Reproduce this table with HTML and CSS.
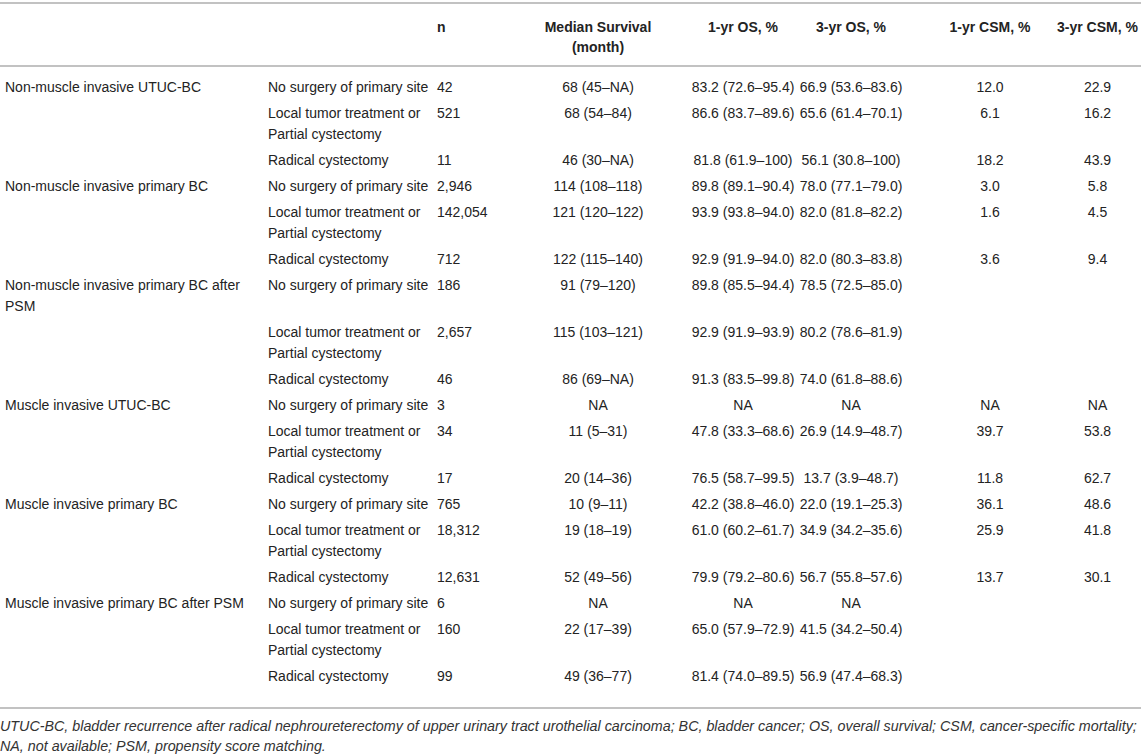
FILE: index.html
```html
<!DOCTYPE html>
<html>
<head>
<meta charset="utf-8">
<link rel="stylesheet" href="styles.css">
</head>
<body>
<div class="wrap">
<table class="tbl">
<colgroup>
<col class="c1"><col class="c2"><col class="c3"><col class="c4"><col class="c5"><col class="c6"><col class="c7"><col class="c8">
</colgroup>
<thead>
<tr>
<th></th><th></th><th>n</th><th>Median Survival<br>(month)</th><th>1-yr OS, %</th><th>3-yr OS, %</th><th>1-yr CSM, %</th><th>3-yr CSM, %</th>
</tr>
</thead>
<tbody>
<tr class="first"><td>Non-muscle invasive UTUC-BC</td><td>No surgery of primary site</td><td>42</td><td>68 (45–NA)</td><td>83.2 (72.6–95.4)</td><td>66.9 (53.6–83.6)</td><td>12.0</td><td>22.9</td></tr>
<tr><td></td><td>Local tumor treatment or Partial cystectomy</td><td>521</td><td>68 (54–84)</td><td>86.6 (83.7–89.6)</td><td>65.6 (61.4–70.1)</td><td>6.1</td><td>16.2</td></tr>
<tr><td></td><td>Radical cystectomy</td><td>11</td><td>46 (30–NA)</td><td>81.8 (61.9–100)</td><td>56.1 (30.8–100)</td><td>18.2</td><td>43.9</td></tr>

<tr><td>Non-muscle invasive primary BC</td><td>No surgery of primary site</td><td>2,946</td><td>114 (108–118)</td><td>89.8 (89.1–90.4)</td><td>78.0 (77.1–79.0)</td><td>3.0</td><td>5.8</td></tr>
<tr><td></td><td>Local tumor treatment or Partial cystectomy</td><td>142,054</td><td>121 (120–122)</td><td>93.9 (93.8–94.0)</td><td>82.0 (81.8–82.2)</td><td>1.6</td><td>4.5</td></tr>
<tr><td></td><td>Radical cystectomy</td><td>712</td><td>122 (115–140)</td><td>92.9 (91.9–94.0)</td><td>82.0 (80.3–83.8)</td><td>3.6</td><td>9.4</td></tr>

<tr><td>Non-muscle invasive primary BC after PSM</td><td>No surgery of primary site</td><td>186</td><td>91 (79–120)</td><td>89.8 (85.5–94.4)</td><td>78.5 (72.5–85.0)</td><td></td><td></td></tr>
<tr><td></td><td>Local tumor treatment or Partial cystectomy</td><td>2,657</td><td>115 (103–121)</td><td>92.9 (91.9–93.9)</td><td>80.2 (78.6–81.9)</td><td></td><td></td></tr>
<tr><td></td><td>Radical cystectomy</td><td>46</td><td>86 (69–NA)</td><td>91.3 (83.5–99.8)</td><td>74.0 (61.8–88.6)</td><td></td><td></td></tr>

<tr><td>Muscle invasive UTUC-BC</td><td>No surgery of primary site</td><td>3</td><td>NA</td><td>NA</td><td>NA</td><td>NA</td><td>NA</td></tr>
<tr><td></td><td>Local tumor treatment or Partial cystectomy</td><td>34</td><td>11 (5–31)</td><td>47.8 (33.3–68.6)</td><td>26.9 (14.9–48.7)</td><td>39.7</td><td>53.8</td></tr>
<tr><td></td><td>Radical cystectomy</td><td>17</td><td>20 (14–36)</td><td>76.5 (58.7–99.5)</td><td>13.7 (3.9–48.7)</td><td>11.8</td><td>62.7</td></tr>

<tr><td>Muscle invasive primary BC</td><td>No surgery of primary site</td><td>765</td><td>10 (9–11)</td><td>42.2 (38.8–46.0)</td><td>22.0 (19.1–25.3)</td><td>36.1</td><td>48.6</td></tr>
<tr><td></td><td>Local tumor treatment or Partial cystectomy</td><td>18,312</td><td>19 (18–19)</td><td>61.0 (60.2–61.7)</td><td>34.9 (34.2–35.6)</td><td>25.9</td><td>41.8</td></tr>
<tr><td></td><td>Radical cystectomy</td><td>12,631</td><td>52 (49–56)</td><td>79.9 (79.2–80.6)</td><td>56.7 (55.8–57.6)</td><td>13.7</td><td>30.1</td></tr>

<tr><td>Muscle invasive primary BC after PSM</td><td>No surgery of primary site</td><td>6</td><td>NA</td><td>NA</td><td>NA</td><td></td><td></td></tr>
<tr><td></td><td>Local tumor treatment or Partial cystectomy</td><td>160</td><td>22 (17–39)</td><td>65.0 (57.9–72.9)</td><td>41.5 (34.2–50.4)</td><td></td><td></td></tr>
<tr class="last"><td></td><td>Radical cystectomy</td><td>99</td><td>49 (36–77)</td><td>81.4 (74.0–89.5)</td><td>56.9 (47.4–68.3)</td><td></td><td></td></tr>
</tbody>
</table>
<p class="note">UTUC-BC, bladder recurrence after radical nephroureterectomy of upper urinary tract urothelial carcinoma; BC, bladder cancer; OS, overall survival; CSM, cancer-specific mortality;<br>NA, not available; PSM, propensity score matching.</p>
</div>
</body>
</html>
```

FILE: styles.css
```css
html, body {
  margin: 0;
  padding: 0;
  background: #ffffff;
}
body {
  font-family: "Liberation Sans", Arial, Helvetica, sans-serif;
  color: #232323;
}
.wrap {
  width: 1141px;
  padding-top: 2px;
}
.tbl {
  width: 1141px;
  border-collapse: collapse;
  table-layout: fixed;
  font-size: 14px;
  line-height: 21px;
}
.c1 { width: 263px; }
.c2 { width: 169px; }
.c3 { width: 76px; }
.c4 { width: 180px; }
.c5 { width: 110px; }
.c6 { width: 106px; }
.c7 { width: 150px; }
.c8 { width: 87px; }
.tbl thead tr {
  border-top: 2px solid #c2c2c2;
  border-bottom: 2px solid #c2c2c2;
}
.tbl th {
  font-weight: bold;
  text-align: center;
  vertical-align: top;
  white-space: nowrap;
  line-height: 20px;
  padding: 13px 0 8px 0;
}
.tbl td {
  text-align: center;
  vertical-align: top;
  white-space: nowrap;
  padding: 3px 0 2px 0;
}
.tbl td:nth-child(1),
.tbl td:nth-child(2) {
  white-space: normal;
}
.tbl td:nth-child(1) {
  text-align: left;
  padding-left: 5px;
  padding-right: 3px;
}
.tbl td:nth-child(2),
.tbl th:nth-child(2) {
  text-align: left;
  padding-left: 5px;
  padding-right: 2px;
}
.tbl td:nth-child(3),
.tbl th:nth-child(3) {
  text-align: left;
  padding-left: 5px;
}
.tbl td:nth-child(7),
.tbl th:nth-child(7) {
  padding-left: 22px;
}
.tbl tr.first td {
  padding-top: 10px;
}
.tbl tr.last td {
  padding-bottom: 20px;
}
.tbl tbody {
  border-bottom: 2px solid #c2c2c2;
}
.note {
  margin: 7px 0 0 0;
  font-size: 14.3px;
  line-height: 20px;
  font-style: italic;
  color: #333333;
  white-space: nowrap;
}
```
